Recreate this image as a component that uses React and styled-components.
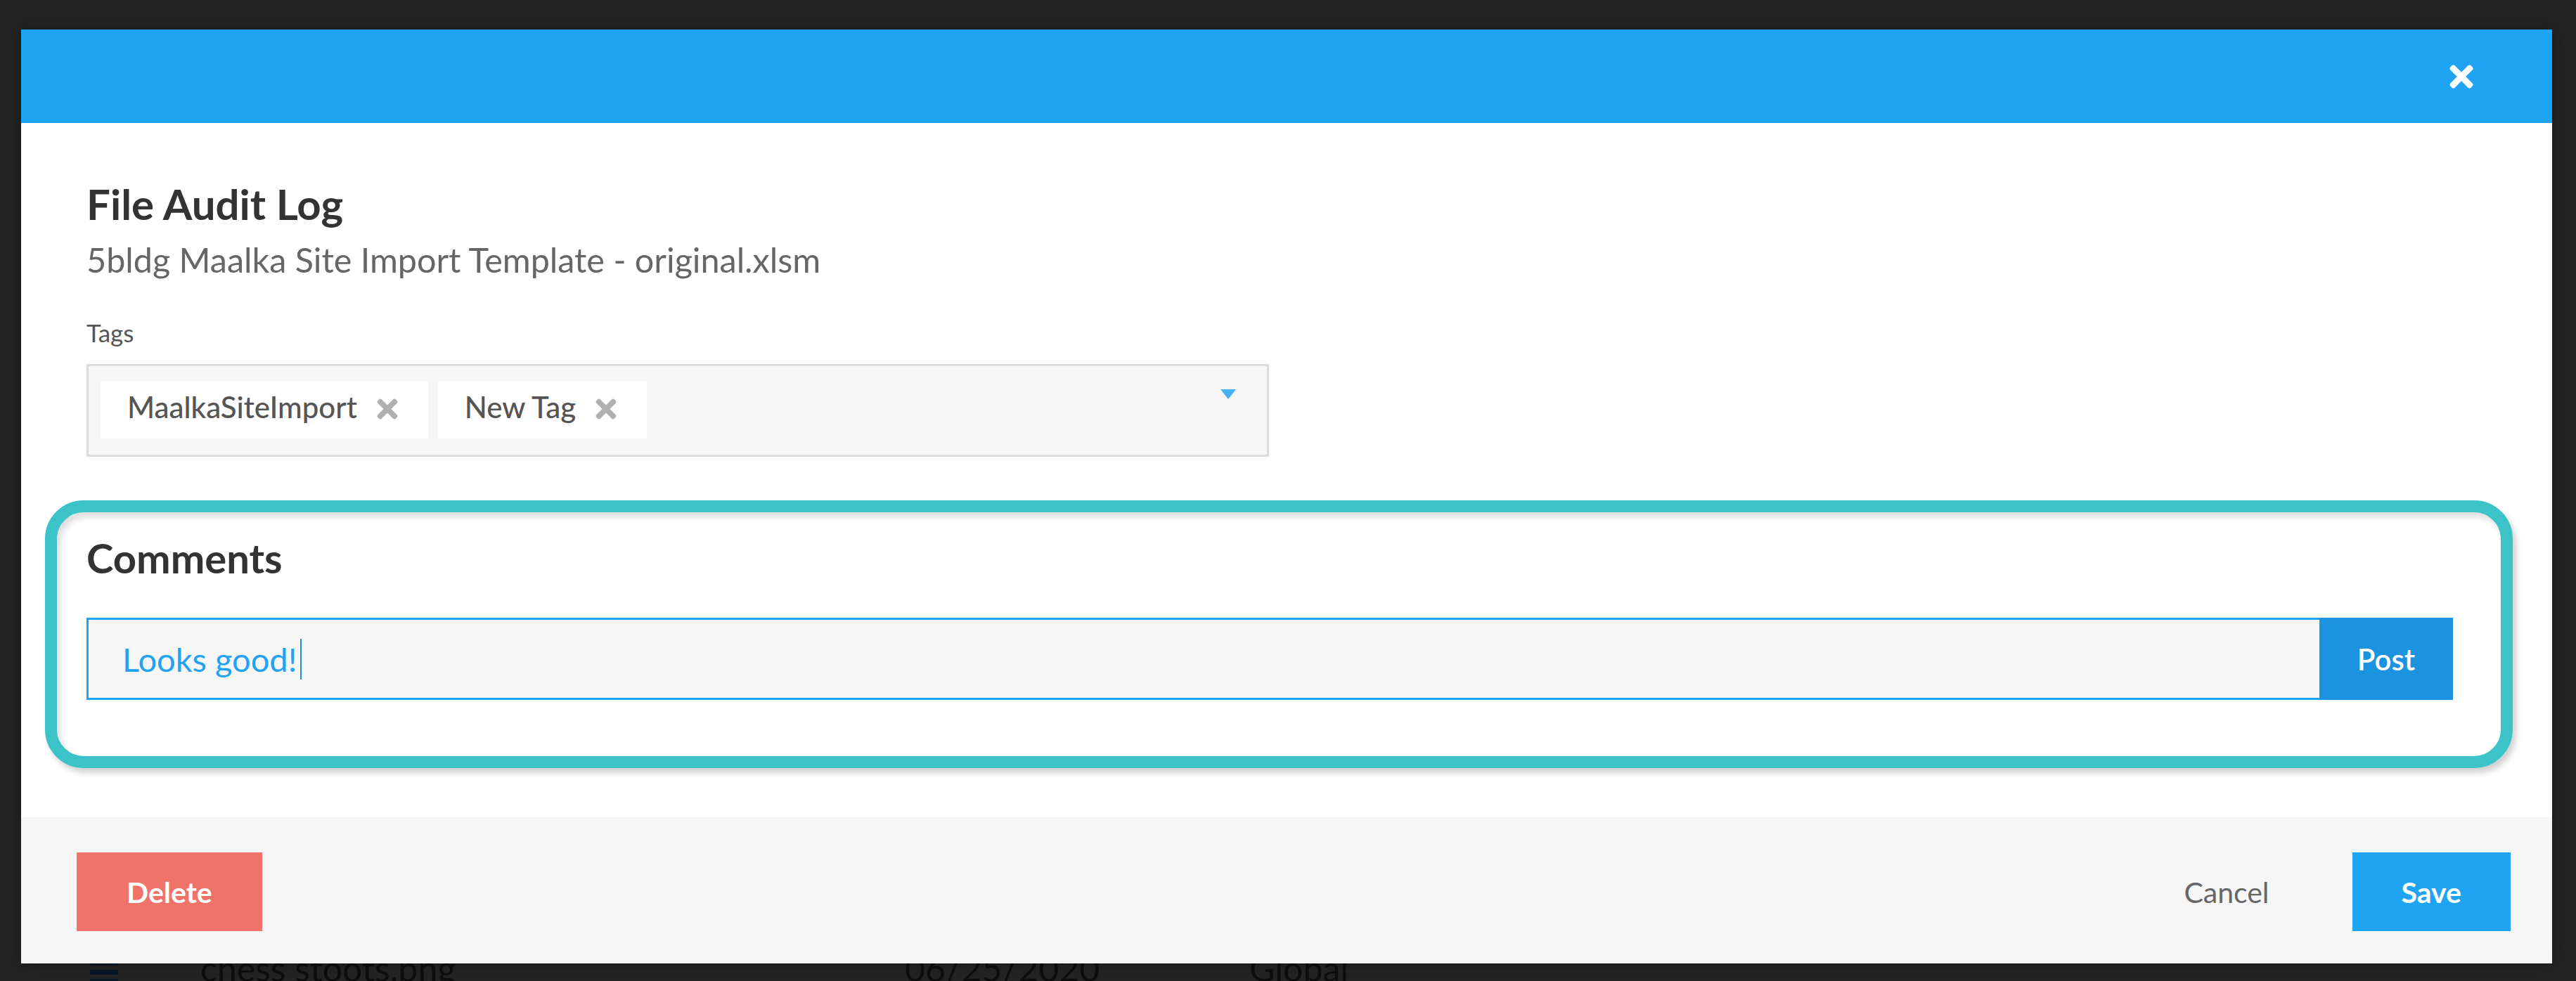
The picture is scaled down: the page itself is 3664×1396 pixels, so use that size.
import React from 'react'
import styled, { createGlobalStyle } from 'styled-components'
import { FaTimes } from 'react-icons/fa'

const GlobalStyle = createGlobalStyle`
  html, body {
    margin: 0;
    padding: 0;
    background: #242424;
    overflow: hidden;
  }
  * {
    box-sizing: border-box;
  }
`

const Page = styled.div`
  width: 3664px;
  height: 1396px;
  overflow: hidden;
  background: #242424;
  padding: 42px 34px 0 30px;
  font-family: Lato, "Open Sans", "Liberation Sans", sans-serif;
`

const Modal = styled.div`
  position: relative;
  z-index: 1;
  height: 1329px;
  background: #fff;
  display: flex;
  flex-direction: column;
  box-shadow: 0 0 24px rgba(0, 0, 0, 0.35);
`

const Header = styled.header`
  height: 133px;
  flex-shrink: 0;
  background: #1fa3f3;
  display: flex;
  align-items: center;
  justify-content: flex-end;
  padding-right: 105px;
`

const CloseButton = styled.button`
  border: none;
  background: none;
  padding: 0;
  color: #fff;
  display: flex;
  cursor: pointer;
`

const Body = styled.div`
  flex: 1;
  padding: 79px 141px 0 93px;
`

const Title = styled.h2`
  margin: 0;
  font-size: 60px;
  line-height: 72px;
  font-weight: 700;
  color: #333;
`

const Subtitle = styled.div`
  margin-top: 14px;
  font-size: 48.5px;
  line-height: 59px;
  color: #666;
`

const Label = styled.label`
  display: block;
  margin-top: 53px;
  font-size: 35px;
  line-height: 42px;
  color: #555;
`

const TagBox = styled.div`
  margin-top: 24px;
  width: 1682px;
  height: 132px;
  border: 3px solid #ddd;
  background: #f6f6f6;
  padding: 21px 17px;
  display: flex;
  align-items: flex-start;
  gap: 14px;
`

const Chip = styled.span`
  height: 82px;
  padding: 0 37px 8px 38px;
  background: #fff;
  border-radius: 3px;
  display: flex;
  align-items: center;
  gap: 22px;
  font-size: 42px;
  font-weight: 500;
  color: #555;
`

const ChipRemove = styled.span`
  display: flex;
  color: #b0b0b0;
  margin-top: 6px;
`

const Caret = styled.span`
  margin: 12px 27px 0 auto;
  width: 0;
  height: 0;
  border-left: 11.5px solid transparent;
  border-right: 11.5px solid transparent;
  border-top: 14px solid #46b0f5;
`

const CommentFrame = styled.section`
  margin: 62px -85px 0 -59px;
  border: 17px solid #3bc3c8;
  border-radius: 55px;
  padding: 30px 68px 80px 42px;
  box-shadow: 5px 7px 8px rgba(0, 0, 0, 0.18), inset 5px 7px 8px rgba(0, 0, 0, 0.13);
`

const SectionTitle = styled.h3`
  margin: 0;
  font-size: 58px;
  line-height: 70px;
  font-weight: 700;
  color: #333;
`

const InputRow = styled.div`
  margin-top: 50px;
  height: 117px;
  display: flex;
`

const CommentInput = styled.div`
  flex: 1;
  border: 3px solid #1fa3f3;
  border-right: none;
  background: #f6f6f6;
  padding-left: 48px;
  display: flex;
  align-items: center;
  font-size: 47px;
  color: #1fa3f3;
`

const TextCursor = styled.span`
  width: 2px;
  height: 58px;
  margin-left: 5px;
  background: #1f8fd6;
`

const Button = styled.button`
  height: ${p => p.$tall || 112}px;
  padding: 0 ${p => p.$pad ?? 70}px;
  border: none;
  border-radius: 0;
  background: ${p => p.$bg || 'transparent'};
  color: ${p => p.$color || '#fff'};
  font-family: inherit;
  font-size: ${p => p.$size || 41}px;
  font-weight: ${p => p.$weight || 700};
  cursor: pointer;
`

const PostButton = styled(Button)`
  width: 190px;
`

const CancelButton = styled(Button)`
  margin-right: 48px;
`

const Footer = styled.footer`
  height: 208px;
  flex-shrink: 0;
  background: #f6f6f6;
  padding: 50px 59px 0 79px;
  display: flex;
  align-items: flex-start;
`

const Spacer = styled.div`
  flex: 1;
`

/* table row showing behind the dialog */
const BehindRow = styled.div`
  margin-top: -18px;
  height: 60px;
  display: flex;
  align-items: flex-start;
  font-size: 50px;
  line-height: 50px;
  color: #0e0e0e;
`

const Cell = styled.div`
  width: ${p => p.$w}px;
  flex-shrink: 0;
  white-space: nowrap;
`

const Burger = styled.div`
  margin: 14px 0 0 98px;
  width: 157px;
  display: flex;
  flex-direction: column;
  gap: 6px;

  span {
    width: 40px;
    height: 7px;
    background: #06192a;
  }
`

function Tag({ label }) {
  return (
    <Chip>
      {label}
      <ChipRemove>
        <FaTimes size={42} />
      </ChipRemove>
    </Chip>
  )
}

export default function App() {
  return (
    <Page>
      <GlobalStyle />
      <Modal>
        <Header>
          <CloseButton>
            <FaTimes size={48} />
          </CloseButton>
        </Header>
        <Body>
          <Title>File Audit Log</Title>
          <Subtitle>5bldg Maalka Site Import Template - original.xlsm</Subtitle>
          <Label>Tags</Label>
          <TagBox>
            <Tag label="MaalkaSiteImport" />
            <Tag label="New Tag" />
            <Caret />
          </TagBox>
          <CommentFrame>
            <SectionTitle>Comments</SectionTitle>
            <InputRow>
              <CommentInput>
                Looks good!
                <TextCursor />
              </CommentInput>
              <PostButton $tall={117} $pad={0} $bg="#1b93de" $size={42} $weight={600}>
                Post
              </PostButton>
            </InputRow>
          </CommentFrame>
        </Body>
        <Footer>
          <Button $bg="#ef7369" $pad={71}>Delete</Button>
          <Spacer />
          <CancelButton $color="#666" $weight={400}>Cancel</CancelButton>
          <Button $bg="#1fa3f3">Save</Button>
        </Footer>
      </Modal>
      <BehindRow>
        <Burger>
          <span />
          <span />
          <span />
        </Burger>
        <Cell $w={1002}>chess stoots.png</Cell>
        <Cell $w={490}>06/25/2020</Cell>
        <Cell $w={400}>Global</Cell>
      </BehindRow>
    </Page>
  )
}
